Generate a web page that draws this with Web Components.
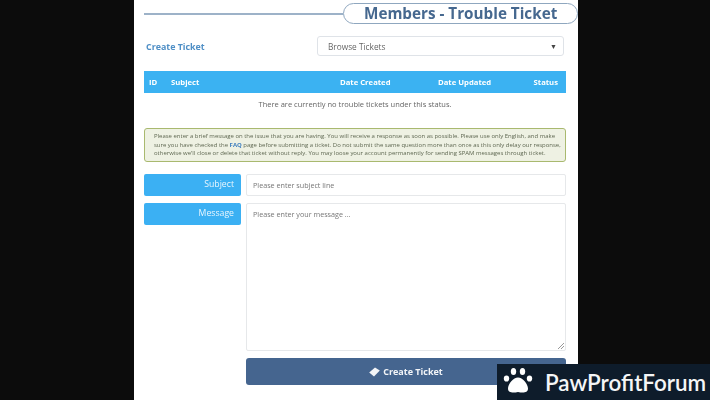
<!DOCTYPE html>
<html>
<head>
<meta charset="utf-8">
<title>Members - Trouble Ticket</title>
<style>
  html, body { margin: 0; height: 100%; background: #0c0c0c; overflow: hidden; }
  body { font-family: "Open Sans", "Liberation Sans", sans-serif; }
</style>
</head>
<body>
<ticket-panel>
  <title-bar>Members - Trouble Ticket</title-bar>
  <ticket-toolbar></ticket-toolbar>
  <ticket-table></ticket-table>
  <notice-box></notice-box>
  <ticket-form></ticket-form>
</ticket-panel>
<forum-badge></forum-badge>

<script>
class TicketPanel extends HTMLElement {
  constructor() {
    super();
    this.attachShadow({ mode: 'open' });
    this.shadowRoot.innerHTML = `
      <style>
        :host {
          display: block;
          box-sizing: border-box;
          width: 444px;
          height: 400px;
          margin-left: 134px;
          padding: 3px 12px 0 10px;
          background: #fff;
          filter: blur(0.35px);
        }
      </style>
      <slot></slot>
    `;
  }
}

class TitleBar extends HTMLElement {
  constructor() {
    super();
    this.attachShadow({ mode: 'open' });
    this.shadowRoot.innerHTML = `
      <style>
        :host {
          display: flex;
          align-items: center;
          height: 21px;
          margin-right: -12px;
        }
        .line { flex: 1; height: 2px; background: #9db2c8; }
        .pill {
          box-sizing: border-box;
          width: 235px;
          height: 21px;
          border: 1.5px solid #8fa7bf;
          border-radius: 11px;
          padding-left: 20px;
          font: 700 15.25px/19px "Open Sans", sans-serif;
          color: #46688f;
          white-space: nowrap;
        }
      </style>
      <div class="line"></div>
      <div class="pill"><slot></slot></div>
    `;
  }
}

class TicketToolbar extends HTMLElement {
  constructor() {
    super();
    this.attachShadow({ mode: 'open' });
    this.shadowRoot.innerHTML = `
      <style>
        :host {
          display: flex;
          align-items: center;
          justify-content: space-between;
          height: 20px;
          margin: 12px 2px 0 2px;
        }
        .link { font: 700 8.9px "Open Sans", sans-serif; color: #4f8fc6; }
        .select {
          box-sizing: border-box;
          width: 247px;
          height: 20px;
          display: flex;
          align-items: center;
          justify-content: space-between;
          padding: 0 6px 0 10px;
          border: 1px solid #dfe3e8;
          border-radius: 3px;
          font: 8.3px "Open Sans", sans-serif;
          color: #666;
        }
        .arrow { font-size: 7px; color: #444; }
      </style>
      <span class="link">Create Ticket</span>
      <div class="select"><span>Browse Tickets</span><span class="arrow">▼</span></div>
    `;
  }
}

class TicketTable extends HTMLElement {
  constructor() {
    super();
    this.attachShadow({ mode: 'open' });
    this.shadowRoot.innerHTML = `
      <style>
        :host { display: block; margin-top: 15px; }
        .head {
          display: grid;
          grid-template-columns: 22px 169px 98px 1fr auto;
          align-items: center;
          height: 22px;
          padding: 0 8px 0 5px;
          background: #3bb2f2;
          font: 700 7.7px "Open Sans", sans-serif;
          color: #fff;
        }
        .empty {
          height: 23px;
          text-align: center;
          font: 7.5px/22px "Open Sans", sans-serif;
          color: #666;
        }
      </style>
      <div class="head">
        <span>ID</span><span>Subject</span><span>Date Created</span><span>Date Updated</span><span>Status</span>
      </div>
      <div class="empty">There are currently no trouble tickets under this status.</div>
    `;
  }
}

class NoticeBox extends HTMLElement {
  constructor() {
    super();
    this.attachShadow({ mode: 'open' });
    this.shadowRoot.innerHTML = `
      <style>
        :host {
          display: block;
          box-sizing: border-box;
          height: 34px;
          margin-top: 12px;
          padding: 3px 9px;
          border: 1.5px solid #a9b96f;
          border-radius: 3px;
          background: #eef1e3;
          font: 5.97px/8.5px "Open Sans", sans-serif;
          color: #5f6852;
          white-space: nowrap;
        }
        b { color: #3f7fbe; }
      </style>
      Please enter a brief message on the issue that you are having. You will receive a response as soon as possible. Please use only English, and make<br>
      sure you have checked the <b>FAQ</b> page before submitting a ticket. Do not submit the same question more than once as this only delay our response,<br>
      otherwise we'll close or delete that ticket without reply. You may loose your account permanently for sending SPAM messages through ticket.
    `;
  }
}

class TicketForm extends HTMLElement {
  constructor() {
    super();
    this.attachShadow({ mode: 'open' });
    this.shadowRoot.innerHTML = `
      <style>
        :host {
          display: grid;
          grid-template-columns: 97px 1fr;
          grid-template-rows: 22px 148px 27px;
          gap: 7px 5px;
          margin-top: 12px;
        }
        .label {
          height: 22px;
          box-sizing: border-box;
          padding-right: 7px;
          border-radius: 2px;
          background: #3bb0f3;
          color: #e9f6fe;
          text-align: right;
          font: 8.7px/20px "Open Sans", sans-serif;
        }
        .field {
          box-sizing: border-box;
          border: 1px solid #e6e8ea;
          border-radius: 2px;
          padding: 0 6px;
          font: 7.2px/21px "Open Sans", sans-serif;
          color: #777;
          position: relative;
        }
        .grip { position: absolute; right: 1px; bottom: 1px; width: 6px; height: 6px; }
        .submit {
          grid-column: 2;
          display: flex;
          align-items: center;
          justify-content: center;
          gap: 3px;
          border-radius: 3px;
          background: #45658f;
          color: #f3f5f8;
          font: 700 9px "Open Sans", sans-serif;
        }
        .submit svg { width: 11px; height: 10px; }
      </style>
      <div class="label">Subject</div>
      <div class="field">Please enter subject line</div>
      <div class="label">Message</div>
      <div class="field">Please enter your message ...
        <svg class="grip" viewBox="0 0 6 6"><path d="M0 6 6 0M3 6 6 3" stroke="#999" stroke-width="1"/></svg>
      </div>
      <div class="submit">
        <svg viewBox="0 0 11 10"><path d="M0.2 5.500 6 0.500 10.800 3.600 5 9.500Z" fill="#f3f5f8"/></svg>
        <span>Create Ticket</span>
      </div>
    `;
  }
}

class ForumBadge extends HTMLElement {
  constructor() {
    super();
    this.attachShadow({ mode: 'open' });
    this.shadowRoot.innerHTML = `
      <style>
        :host {
          position: absolute;
          right: 0;
          bottom: 0;
          box-sizing: border-box;
          width: 213px;
          height: 36px;
          display: flex;
          align-items: center;
          gap: 12px;
          padding-left: 6px;
          background: #0e1c2b;
          color: #f5f6f7;
          font: 600 22.4px "Lato", "Open Sans", sans-serif;
          white-space: nowrap;
        }
        svg { width: 30px; height: 30px; flex: none; }
      </style>
      <svg viewBox="0 0 30 30" fill="#fff">
        <ellipse cx="3.500" cy="11.500" rx="2.700" ry="3.100"/>
        <ellipse cx="10.500" cy="4.500" rx="2.700" ry="3.500"/>
        <ellipse cx="19.500" cy="4.500" rx="2.700" ry="3.500"/>
        <ellipse cx="26.500" cy="11.500" rx="2.700" ry="3.100"/>
        <path d="M15 10.500c4.500 0 10 6.500 10 11 0 4.500-5 4.500-10 3.500-5 1-10 1-10-3.500 0-4.500 5.500-11 10-11Z"/>
      </svg>
      <span>PawProfitForum</span>
    `;
  }
}

customElements.define('ticket-panel', TicketPanel);
customElements.define('title-bar', TitleBar);
customElements.define('ticket-toolbar', TicketToolbar);
customElements.define('ticket-table', TicketTable);
customElements.define('notice-box', NoticeBox);
customElements.define('ticket-form', TicketForm);
customElements.define('forum-badge', ForumBadge);
</script>
</body>
</html>
